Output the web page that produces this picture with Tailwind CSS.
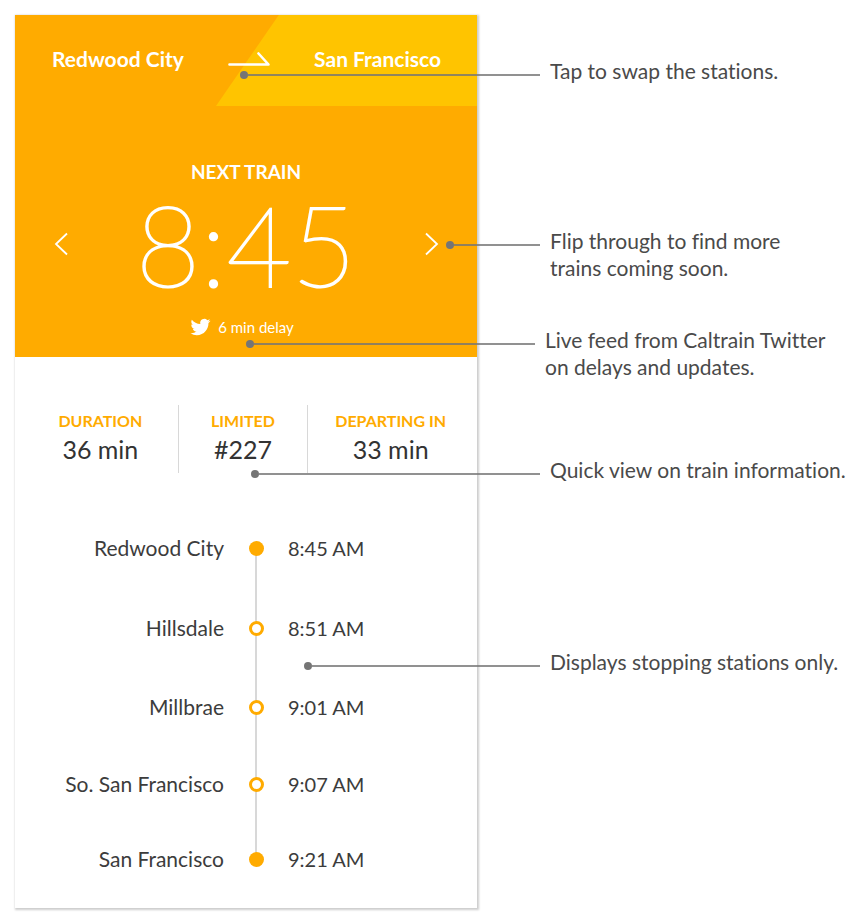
<!DOCTYPE html>
<html lang="en">
<head>
<meta charset="utf-8">
<meta name="viewport" content="width=device-width, initial-scale=1">
<title>Caltrain – Next Train</title>
<script src="https://cdn.jsdelivr.net/npm/@tailwindcss/browser@4"></script>
</head>
<body class="overflow-x-hidden bg-white font-['Lato','Liberation_Sans',sans-serif] text-[#4a4a4a] [font-variant-ligatures:no-common-ligatures]">
<main class="grid grid-cols-[462fr_378fr] pt-[15px] pb-4 pl-[15px]">

  <!-- App screen -->
  <section class="bg-white shadow-[1px_1px_2px_1px_rgba(0,0,0,0.2)]">
    <div class="bg-[#ffab00] text-white">
      <button type="button" aria-label="Swap stations" class="relative flex h-[91px] w-full items-center justify-between pr-9 pb-1 pl-[37px] text-[21px] font-bold">
        <span class="absolute inset-0 bg-[#ffc400] [clip-path:polygon(57.1%_0,100%_0,100%_100%,43.5%_100%)]"></span>
        <span class="relative">Redwood City</span>
        <svg class="relative" width="42" height="16" viewBox="0 0 42 16" fill="none" stroke="currentColor" stroke-width="2.600" stroke-linecap="round" stroke-linejoin="round"><path d="M1.500 13.500H40.500L30.500 2.500"/></svg>
        <span class="relative">San Francisco</span>
      </button>

      <div class="flex flex-col items-center pt-[54px] pb-5">
        <h1 class="text-[19px] leading-6 font-bold">NEXT TRAIN</h1>
        <div class="flex w-full items-center justify-between px-9">
          <button type="button" aria-label="Previous train" class="flex w-5 justify-center"><svg width="16" height="24" viewBox="0 0 16 24" fill="none" stroke="currentColor" stroke-width="1.800"><path d="M14 1.500L3 12L14 22.500"/></svg></button>
          <time class="text-[112px] leading-[120px] font-thin [-webkit-text-stroke:2px_white]">8:45</time>
          <button type="button" aria-label="Next train" class="flex w-5 justify-center"><svg width="16" height="24" viewBox="0 0 16 24" fill="none" stroke="currentColor" stroke-width="1.800"><path d="M3 1.500L14 12L3 22.500"/></svg></button>
        </div>
        <p class="mt-[13px] flex items-center gap-[7px] pr-2 text-[15px] leading-5">
          <svg width="21" height="20" viewBox="0 0 24 24" fill="currentColor"><path d="M23.954 4.569a10 10 0 0 1-2.825.775 4.958 4.958 0 0 0 2.163-2.723c-.951.555-2.005.959-3.127 1.184a4.920 4.920 0 0 0-8.384 4.482C7.691 8.094 4.066 6.130 1.640 3.161a4.822 4.822 0 0 0-.666 2.475c0 1.710.870 3.213 2.188 4.096a4.904 4.904 0 0 1-2.228-.616v.061a4.923 4.923 0 0 0 3.946 4.827 4.996 4.996 0 0 1-2.212.085 4.937 4.937 0 0 0 4.604 3.417 9.868 9.868 0 0 1-6.102 2.105c-.390 0-.779-.023-1.170-.067a13.995 13.995 0 0 0 7.557 2.209c9.054 0 13.999-7.496 13.999-13.986 0-.209 0-.420-.015-.630a9.936 9.936 0 0 0 2.460-2.548z"/></svg>
          <span>6 min delay</span>
        </p>
      </div>
    </div>

    <dl class="mt-12 grid grid-cols-[155fr_129fr_164fr] divide-x divide-[#d8d8d8] pr-1 pl-2 text-center">
      <div class="h-[68px] pt-1.5">
        <dt class="text-base leading-5 font-bold text-[#ffab00]">DURATION</dt>
        <dd class="text-[25px] leading-9 text-[#333]">36 min</dd>
      </div>
      <div class="h-[68px] pt-1.5">
        <dt class="text-base leading-5 font-bold text-[#ffab00]">LIMITED</dt>
        <dd class="text-[25px] leading-9 text-[#333]">#227</dd>
      </div>
      <div class="h-[68px] pt-1.5">
        <dt class="text-base leading-5 font-bold text-[#ffab00]">DEPARTING IN</dt>
        <dd class="text-[25px] leading-9 text-[#333]">33 min</dd>
      </div>
    </dl>

    <ol class="mt-[35px] pb-3 text-xl text-[#3c3c3c]">
      <li class="grid grid-cols-[209fr_64px_189fr] leading-[80px]">
        <span class="text-right text-[21px]">Redwood City</span>
        <span class="grid place-items-center"><span class="col-start-1 row-start-1 h-1/2 w-0.5 self-end bg-[#d8d8d8]"></span><span class="col-start-1 row-start-1 size-[15px] rounded-full bg-[#ffab00]"></span></span>
        <time>8:45 AM</time>
      </li>
      <li class="grid grid-cols-[209fr_64px_189fr] leading-[80px]">
        <span class="text-right text-[21px]">Hillsdale</span>
        <span class="grid place-items-center"><span class="col-start-1 row-start-1 h-full w-0.5 bg-[#d8d8d8]"></span><span class="col-start-1 row-start-1 size-[15px] rounded-full border-3 border-[#ffab00] bg-white"></span></span>
        <time>8:51 AM</time>
      </li>
      <li class="grid grid-cols-[209fr_64px_189fr] leading-[78px]">
        <span class="text-right text-[21px]">Millbrae</span>
        <span class="grid place-items-center"><span class="col-start-1 row-start-1 h-full w-0.5 bg-[#d8d8d8]"></span><span class="col-start-1 row-start-1 size-[15px] rounded-full border-3 border-[#ffab00] bg-white"></span></span>
        <time>9:01 AM</time>
      </li>
      <li class="grid grid-cols-[209fr_64px_189fr] leading-[76px]">
        <span class="text-right text-[21px]">So. San Francisco</span>
        <span class="grid place-items-center"><span class="col-start-1 row-start-1 h-full w-0.5 bg-[#d8d8d8]"></span><span class="col-start-1 row-start-1 size-[15px] rounded-full border-3 border-[#ffab00] bg-white"></span></span>
        <time>9:07 AM</time>
      </li>
      <li class="grid grid-cols-[209fr_64px_189fr] leading-[74px]">
        <span class="text-right text-[21px]">San Francisco</span>
        <span class="grid place-items-center"><span class="col-start-1 row-start-1 h-1/2 w-0.5 self-start bg-[#d8d8d8]"></span><span class="col-start-1 row-start-1 size-[15px] rounded-full bg-[#ffab00]"></span></span>
        <time>9:21 AM</time>
      </li>
    </ol>
  </section>

  <!-- Callouts; each leader line reaches back over the screen -->
  <aside class="pt-[42px] pl-[73px] text-[21px] leading-[27px] whitespace-nowrap">
    <p class="relative">
      <span class="absolute top-[14px] right-full mr-[10px] flex w-[300px] items-center"><span class="size-2 rounded-full bg-[#757575]"></span><span class="h-0.5 flex-1 bg-[#757575]/80"></span></span>
      Tap to swap the stations.
    </p>
    <p class="relative mt-[143px]">
      <span class="absolute top-[14px] right-full mr-[10px] flex w-[94px] items-center"><span class="size-2 rounded-full bg-[#757575]"></span><span class="h-0.5 flex-1 bg-[#757575]/80"></span></span>
      Flip through to find more<br>trains coming soon.
    </p>
    <p class="relative mt-[45px] -ml-[5px]">
      <span class="absolute top-[14px] right-full mr-[10px] flex w-[289px] items-center"><span class="size-2 rounded-full bg-[#757575]"></span><span class="h-0.5 flex-1 bg-[#757575]/80"></span></span>
      Live feed from Caltrain Twitter<br>on delays and updates.
    </p>
    <p class="relative mt-[76px]">
      <span class="absolute top-[14px] right-full mr-[10px] flex w-[289px] items-center"><span class="size-2 rounded-full bg-[#757575]"></span><span class="h-0.5 flex-1 bg-[#757575]/80"></span></span>
      Quick view on train information.
    </p>
    <p class="relative mt-[165px]">
      <span class="absolute top-[14px] right-full mr-[10px] flex w-[236px] items-center"><span class="size-2 rounded-full bg-[#757575]"></span><span class="h-0.5 flex-1 bg-[#757575]/80"></span></span>
      Displays stopping stations only.
    </p>
  </aside>
</main>
</body>
</html>
